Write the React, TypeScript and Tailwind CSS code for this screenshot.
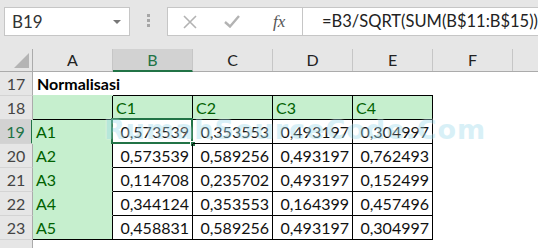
import React from "react";

const cols = ["A", "B", "C", "D", "E", "F"];

const rows = [
  ["A1", "0,573539", "0,353553", "0,493197", "0,304997"],
  ["A2", "0,573539", "0,589256", "0,493197", "0,762493"],
  ["A3", "0,114708", "0,235702", "0,493197", "0,152499"],
  ["A4", "0,344124", "0,353553", "0,164399", "0,457496"],
  ["A5", "0,458831", "0,589256", "0,493197", "0,304997"],
];

function RowHead({ n, active }: { n?: number; active?: boolean }) {
  return (
    <div
      className={`w-[33px] shrink-0 h-full flex items-center justify-center border-b border-[#d4d4d4] ${
        active
          ? "bg-[#d2d2d2] text-[#217346] border-r-2 border-r-[#217346]"
          : "bg-[#e6e6e6] text-[#444] border-r border-r-[#ababab]"
      }`}
    >
      {n}
    </div>
  );
}

export default function App() {
  return (
    <div className="w-[538px] h-[248px] overflow-hidden bg-white font-[Lato,sans-serif] text-[16px] leading-none text-black relative">
      {/* formula bar */}
      <div className="h-[49px] bg-[#e6e6e6] flex items-start pt-[7px] pl-[4px]">
        <div className="w-[126px] h-[29px] bg-white border border-[#c6c6c6] flex items-center pl-[7px] text-[17px] text-[#333]">
          <span>B19</span>
          <span className="ml-auto mr-[8px] w-0 h-0 border-l-[4px] border-r-[4px] border-t-[4px] border-l-transparent border-r-transparent border-t-[#777]" />
        </div>
        <div className="ml-[17px] mt-[7px] flex flex-col gap-[2px]">
          <span className="w-[3px] h-[3px] bg-[#a6a6a6]" />
          <span className="w-[3px] h-[3px] bg-[#a6a6a6]" />
          <span className="w-[3px] h-[3px] bg-[#a6a6a6]" />
        </div>
        <div className="ml-[17px] flex-1 h-[29px] bg-white border border-[#c6c6c6] border-r-0 flex items-center">
          <div className="w-[134px] h-full flex items-center shrink-0">
            <svg width="14" height="14" viewBox="0 0 14 14" className="ml-[15px]">
              <path d="M1 1L13 13M13 1L1 13" stroke="#b3b3b3" strokeWidth="1.6" fill="none" />
            </svg>
            <svg width="16" height="13" viewBox="0 0 16 13" className="ml-[27px]">
              <path d="M1 7L6 11.5L15 1" stroke="#b3b3b3" strokeWidth="2.4" fill="none" />
            </svg>
            <span className="ml-[33px] font-['Liberation_Serif',serif] italic text-[17px] text-[#555]">fx</span>
          </div>
          <div className="h-full border-l border-[#c6c6c6] flex items-center pl-[19px] text-[16.5px] text-[#222] whitespace-nowrap">
            =B3/SQRT(SUM(B$11:B$15))
          </div>
        </div>
      </div>

      {/* column header */}
      <div className="h-[23px] flex bg-[#e6e6e6] border-b border-[#ababab]">
        <div className="w-[33px] shrink-0 h-full border-r border-[#ababab] relative">
          <span className="absolute right-[3px] bottom-[3px] w-0 h-0 [border-bottom:15px_solid_#b4b4b4] [border-left:15px_solid_transparent]" />
        </div>
        {cols.map((c) =>
          c === "B" ? (
            <div
              key={c}
              className="w-[80px] shrink-0 h-[23px] bg-[#d2d2d2] text-[#217346] border-r border-[#c6c6c6] border-b-2 border-b-[#217346] flex items-center justify-center"
            >
              {c}
            </div>
          ) : (
            <div
              key={c}
              className="w-[80px] shrink-0 h-full border-r border-[#c6c6c6] flex items-center justify-center text-[#222]"
            >
              {c}
            </div>
          )
        )}
        <div className="flex-1" />
      </div>

      {/* row 17 */}
      <div className="h-[24px] flex">
        <RowHead n={17} />
        <div className="w-[80px] shrink-0 h-full flex items-center pl-[4px] font-bold whitespace-nowrap overflow-visible border-b border-[#c6efce]">
          Normalisasi
        </div>
        {[0, 1, 2, 3].map((i) => (
          <div key={i} className="w-[80px] shrink-0 h-full border-b border-black" />
        ))}
        <div className="flex-1" />
      </div>

      {/* row 18 */}
      <div className="h-[24px] flex">
        <RowHead n={18} />
        <div className="w-[80px] shrink-0 h-full bg-[#c6efce] border-r border-b border-black" />
        {["C1", "C2", "C3", "C4"].map((t) => (
          <div
            key={t}
            className="w-[80px] shrink-0 h-full bg-[#c6efce] border-r border-b border-black flex items-center pl-[3px] text-[#006100]"
          >
            {t}
          </div>
        ))}
        <div className="flex-1" />
      </div>

      {/* rows 19-23 */}
      {rows.map((r, ri) => (
        <div key={ri} className="h-[24px] flex">
          <RowHead n={19 + ri} active={ri === 0} />
          <div
            className={`w-[80px] shrink-0 h-full bg-[#c6efce] border-r border-r-black border-b flex items-center pl-[3px] text-[#006100] ${
              ri === 4 ? "border-b-black" : "border-b-[#c6efce]"
            } ${ri === 0 ? "-ml-[1px] pl-[4px] w-[81px]" : ""}`}
          >
            {r[0]}
          </div>
          {r.slice(1).map((v, vi) => (
            <div
              key={vi}
              className="w-[80px] shrink-0 h-full border-r border-b border-black flex items-center justify-end pr-[3px] text-[#111] relative"
            >
              {v}
              {ri === 0 && vi === 0 && (
                <>
                  <span className="absolute -left-[2px] -top-[2px] w-[82px] h-[26px] border-2 border-[#217346]" />
                  <span className="absolute -right-[4px] -bottom-[4px] w-[6px] h-[6px] bg-[#217346] border border-white" />
                </>
              )}
            </div>
          ))}
          <div className="flex-1" />
        </div>
      ))}

      {/* row 24, only its top edge is in view */}
      <div className="h-[24px] flex">
        <RowHead />
        <div className="flex-1" />
      </div>

      {/* watermark */}
      <div className="absolute left-[104px] top-[116px] pointer-events-none font-['DejaVu_Sans',sans-serif] font-bold text-[27px] tracking-[1px] text-[#9fdcec] opacity-40 whitespace-nowrap [text-shadow:0_0_2px_#fff,0_0_2px_#fff]">
        RumahSourceCode.Com
      </div>
    </div>
  );
}
